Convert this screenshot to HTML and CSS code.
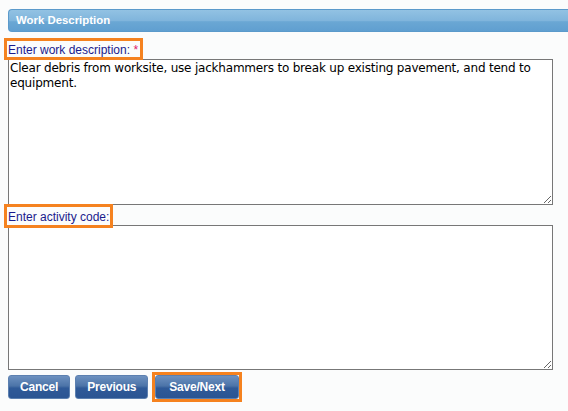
FILE: index.html
```html
<!doctype html>

<html lang="en">
    <head>
        <meta charset="utf-8">
        <title>Work Description</title>
        <link rel="stylesheet" href="styles.css">
    </head>

    <body>
        <div class="panel">
            <div class="panelHeader">Work Description</div>

            <div class="field">
                <label class="fieldLabel marked descLabel" for="workDescription">
                    Enter work description: <span class="required">*</span>
                </label>
                <textarea id="workDescription" class="fieldBox descBox">Clear debris from worksite, use jackhammers to break up existing pavement, and tend to equipment.</textarea>
                <label class="fieldLabel marked codeLabel" for="activityCode">Enter activity code:</label>
                <textarea id="activityCode" class="fieldBox codeBox"></textarea>
            </div>

            <div class="buttonRow">
                <button class="navButton">Cancel</button>
                <button class="navButton">Previous</button>
                <span class="marked buttonMark">
                    <button class="navButton">Save/Next</button>
                </span>
            </div>
        </div>
    </body>
</html>
```

FILE: styles.css
```css
body {
    margin: 0;
    background-color: #fbfcfc;
    font-family: "Liberation Sans", Arial, sans-serif;
}

.panel {
    padding: 9px 0 0 8px;
}

.panelHeader {
    height: 21px;
    line-height: 21px;
    padding-left: 7px;
    border: 1px solid #5b9acb;
    border-right: 0;
    border-radius: 4px 0 0 4px;
    background: linear-gradient(to bottom, #92c2e3 0%, #80b5dc 50%, #6aa7d4 56%, #609fd0 100%);
    color: #ffffff;
    font-size: 11.4px;
    font-weight: bold;
}

.field {
    display: flex;
    flex-direction: column;
    width: 545px;
    margin-top: 6px;
}

.fieldLabel {
    position: relative;
    z-index: 1;
    align-self: flex-start;
    margin-left: -4px;
    color: #1a1a8c;
    font-size: 12px;
    line-height: 14px;
}

.marked {
    border: 3px solid #f5821f;
}

.descLabel {
    padding: 2px 2px 0 1px;
}

.codeLabel {
    margin-top: -1px;
    padding: 3px 1px 1px 1px;
}

.required {
    color: #e0206a;
}

.fieldBox {
    box-sizing: border-box;
    padding: 1px 1px;
    border: 1px solid #777777;
    background: #ffffff;
    font-family: "DejaVu Sans", Verdana, sans-serif;
    font-size: 12px;
    letter-spacing: -0.2px;
    line-height: 15px;
    resize: vertical;
    outline: none;
}

.descBox {
    margin-top: -1px;
    height: 146px;
}

.codeBox {
    margin-top: -3px;
    height: 145px;
}

.buttonRow {
    display: flex;
    align-items: center;
    margin-top: 2px;
}

.navButton {
    height: 24px;
    margin-right: 5px;
    padding: 0 11px;
    border: 1px solid #5c80b0;
    border-radius: 3px;
    background: linear-gradient(to bottom, #6d91c0 0%, #4c74a8 45%, #2f5a98 55%, #2b5593 100%);
    color: #ffffff;
    font-family: "Liberation Sans", Arial, sans-serif;
    font-size: 12px;
    letter-spacing: -0.2px;
    font-weight: bold;
    cursor: pointer;
}

.buttonMark {
    display: flex;
    margin-left: -1px;
}

.buttonMark .navButton {
    margin-right: 0;
    padding: 0 13px;
}
```
